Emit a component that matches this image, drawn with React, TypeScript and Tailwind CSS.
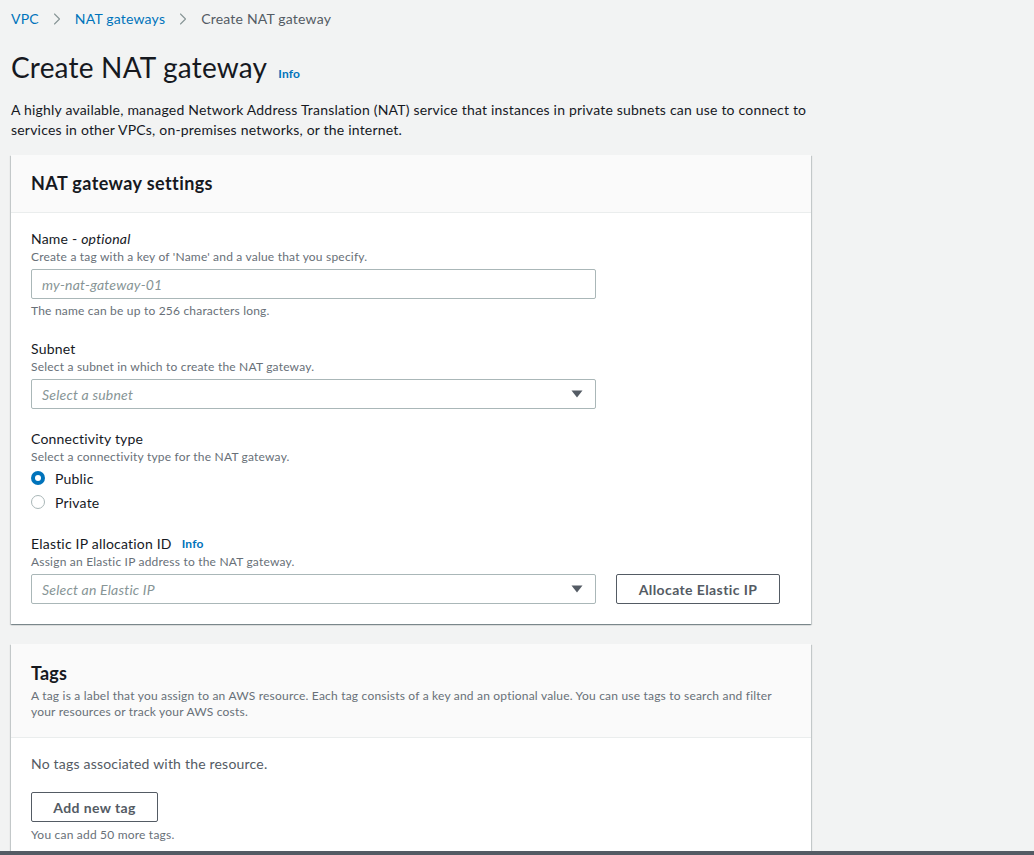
import { ChevronRight } from 'lucide-react'

const font = { fontFamily: '"Lato", "Open Sans", sans-serif' }

function Caret() {
  return (
    <svg width="12" height="8" viewBox="0 0 12 8" className="shrink-0">
      <path d="M0.5 0.5 L11.5 0.5 L6 7.5 Z" fill="#545b64" />
    </svg>
  )
}

function Field({ label, desc, children, info }: { label: React.ReactNode; desc: string; children: React.ReactNode; info?: boolean }) {
  return (
    <div>
      <div className="flex items-center text-[14px] leading-[20px] text-[#16191f]">
        {label}
        {info && <span className="ml-[10px] text-[12px] font-bold text-[#0073bb]">Info</span>}
      </div>
      <div className="text-[12px] leading-[16px] text-[#687078]">{desc}</div>
      <div className="mt-[4px]">{children}</div>
    </div>
  )
}

function Select({ placeholder }: { placeholder: string }) {
  return (
    <div className="flex h-[30px] w-[565px] items-center justify-between rounded-[2px] border border-[#aab7b8] bg-white pl-[10px] pr-[12px]">
      <span className="text-[14px] italic text-[#879596]">{placeholder}</span>
      <Caret />
    </div>
  )
}

export default function App() {
  return (
    <div style={font} className="flex min-h-[855px] flex-col bg-[#f2f3f3] tracking-[0.2px]">
      <div className="flex-1 px-[11px]">
        {/* Breadcrumbs */}
        <nav className="flex h-[37px] items-center text-[14px] text-[#545b64]">
          <span className="text-[#0073bb]">VPC</span>
          <ChevronRight className="mx-[8px] h-[20px] w-[20px] text-[#879596]" strokeWidth={1.3} />
          <span className="text-[#0073bb]">NAT gateways</span>
          <ChevronRight className="mx-[8px] h-[20px] w-[20px] text-[#879596]" strokeWidth={1.3} />
          <span>Create NAT gateway</span>
        </nav>

        <div className="mt-[12px] flex items-end">
          <h1 className="text-[28px] leading-[36px] text-[#16191f]">Create NAT gateway</h1>
          <span className="mb-[2px] ml-[11px] text-[12px] font-bold text-[#0073bb]">Info</span>
        </div>
        <p className="mt-[15px] text-[14px] leading-[20px] text-[#16191f]">
          A highly available, managed Network Address Translation (NAT) service that instances in private subnets can use to connect to
          <br />
          services in other VPCs, on-premises networks, or the internet.
        </p>

        {/* Settings card */}
        <div className="mt-[15px] w-[800px] bg-white shadow-[0_1px_1px_0_rgba(0,28,36,0.3),1px_1px_1px_0_rgba(0,28,36,0.15),-1px_1px_1px_0_rgba(0,28,36,0.15)]">
          <div className="flex h-[58px] items-center border-b border-[#eaeded] bg-[#fafafa] px-[20px]">
            <h2 className="text-[18px] font-bold tracking-[0.4px] text-[#16191f]">NAT gateway settings</h2>
          </div>
          <div className="flex flex-col gap-[20px] px-[20px] pb-[20px] pt-[16px]">
            <Field label={<span>Name - <i>optional</i></span>} desc="Create a tag with a key of 'Name' and a value that you specify.">
              <div className="flex h-[30px] w-[565px] items-center rounded-[2px] border border-[#aab7b8] bg-white px-[10px]">
                <span className="text-[14px] italic text-[#879596]">my-nat-gateway-01</span>
              </div>
              <div className="mt-[4px] text-[12px] leading-[16px] text-[#687078]">The name can be up to 256 characters long.</div>
            </Field>

            <Field label="Subnet" desc="Select a subnet in which to create the NAT gateway.">
              <Select placeholder="Select a subnet" />
            </Field>

            <Field label="Connectivity type" desc="Select a connectivity type for the NAT gateway.">
              <div className="-mt-[3px] flex flex-col">
                <label className="flex h-[24px] items-center gap-[10px] text-[14px] text-[#16191f]">
                  <span className="flex h-[14px] w-[14px] items-center justify-center rounded-full bg-[#0073bb]">
                    <span className="h-[6px] w-[6px] rounded-full bg-white" />
                  </span>
                  Public
                </label>
                <label className="flex h-[24px] items-center gap-[10px] text-[14px] text-[#16191f]">
                  <span className="h-[14px] w-[14px] rounded-full border border-[#aab7b8] bg-white" />
                  Private
                </label>
              </div>
            </Field>

            <Field label="Elastic IP allocation ID" info desc="Assign an Elastic IP address to the NAT gateway.">
              <div className="flex items-center gap-[20px]">
                <Select placeholder="Select an Elastic IP" />
                <button className="h-[30px] w-[164px] rounded-[2px] border border-[#545b64] bg-white text-[14px] font-bold tracking-[0.4px] text-[#545b64]">
                  Allocate Elastic IP
                </button>
              </div>
            </Field>
          </div>
        </div>

        {/* Tags card */}
        <div className="mt-[20px] w-[800px] bg-white shadow-[0_1px_1px_0_rgba(0,28,36,0.3),1px_1px_1px_0_rgba(0,28,36,0.15),-1px_1px_1px_0_rgba(0,28,36,0.15)]">
          <div className="border-b border-[#eaeded] bg-[#fafafa] px-[20px] pb-[17px] pt-[18px]">
            <h2 className="text-[18px] font-bold leading-[22px] text-[#16191f]">Tags</h2>
            <p className="mt-[4px] text-[12px] leading-[16px] text-[#687078]">
              A tag is a label that you assign to an AWS resource. Each tag consists of a key and an optional value. You can use tags to search and filter
              <br />
              your resources or track your AWS costs.
            </p>
          </div>
          <div className="px-[20px] pb-[8px] pt-[16px]">
            <p className="text-[14px] leading-[20px] text-[#545b64]">No tags associated with the resource.</p>
            <button className="mt-[18px] h-[30px] w-[127px] rounded-[2px] border border-[#545b64] bg-white text-[14px] font-bold tracking-[0.4px] text-[#545b64]">
              Add new tag
            </button>
            <p className="mt-[5px] text-[12px] leading-[16px] text-[#687078]">You can add 50 more tags.</p>
          </div>
        </div>
      </div>
      <div className="h-[4px] bg-[#545b64]" />
    </div>
  )
}
